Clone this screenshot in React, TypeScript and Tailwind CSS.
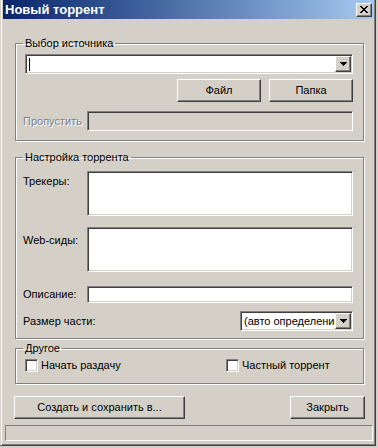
import React from "react";

const sunken =
  "border border-t-[#808080] border-l-[#808080] border-r-white border-b-white shadow-[inset_1px_1px_0_#404040,inset_-1px_-1px_0_#d4d0c8]";
const raised =
  "border border-t-white border-l-white border-r-[#404040] border-b-[#404040] shadow-[inset_-1px_-1px_0_#808080] bg-[#d4d0c8]";
const group =
  "border border-[#808080] shadow-[inset_1px_1px_0_#fff,1px_1px_0_#fff] ml-[12px] mr-[10px] pl-[7px] pr-[10px]";

const DownArrow = () => (
  <svg width="7" height="4" viewBox="0 0 7 4" shapeRendering="crispEdges">
    <path d="M0 0h7v1H0zM1 1h5v1H1zM2 2h3v1H2zM3 3h1v1H3z" fill="#000" />
  </svg>
);

const Combo = ({ className, children }: { className: string; children?: React.ReactNode }) => (
  <div className={`${sunken} bg-white flex items-center p-[1px] ${className}`}>
    <div className="flex-1 min-w-0 overflow-hidden whitespace-nowrap pl-[2px]">{children}</div>
    <div className={`${raised} w-[16px] h-full flex items-center justify-center shrink-0`}>
      <DownArrow />
    </div>
  </div>
);

const Button = ({ className, children }: { className: string; children: React.ReactNode }) => (
  <div className={`${raised} h-[23px] flex items-center justify-center ${className}`}>{children}</div>
);

const Checkbox = ({ label, className }: { label: string; className?: string }) => (
  <div className={`flex items-center gap-[3px] ${className ?? ""}`}>
    <div className={`${sunken} w-[13px] h-[13px] bg-white`} />
    <span>{label}</span>
  </div>
);

export default function App() {
  return (
    <div className="w-[378px] h-[448px] bg-[#d4d0c8] text-[11px] leading-[13px] text-black font-['Tahoma','Liberation_Sans',Arial,sans-serif]">
      <div className="w-[376px] h-[446px] border-l border-r border-b border-l-[#d4d0c8] border-r-[#404040] border-b-[#404040] shadow-[inset_1px_0_0_#fff,inset_-1px_-1px_0_#808080] pl-[2px] pr-[1px] pb-[1px] flex flex-col">
        {/* Title bar */}
        <div className="h-[19px] shrink-0 flex items-center justify-between pl-[2px] pr-[2px] bg-linear-to-r from-[#0a246a] to-[#a6caf0]">
          <span className="text-white font-bold text-[13px] leading-[15px]">Новый торрент</span>
          <div className={`${raised} w-[16px] h-[14px] flex items-center justify-center`}>
            <svg width="8" height="7" viewBox="0 0 8 7" shapeRendering="crispEdges">
              <path
                d="M0 0h2v1H0zM6 0h2v1H6zM1 1h2v1H1zM5 1h2v1H5zM2 2h4v1H2zM3 3h2v1H3zM2 4h4v1H2zM1 5h2v1H1zM5 5h2v1H5zM0 6h2v1H0zM6 6h2v1H6z"
                fill="#000"
              />
            </svg>
          </div>
        </div>

        {/* Source */}
        <fieldset className={`${group} mt-[18px] pt-[4px] pb-[9px]`}>
          <legend className="px-[2px] leading-[13px]">Выбор источника</legend>
          <div className={`${sunken} ml-[2px] h-[20px] bg-white flex items-center p-[1px]`}>
            <div className="flex-1 pl-[2px] flex items-center">
              <div className="w-[1px] h-[13px] bg-black" />
            </div>
            <div className={`${raised} w-[16px] h-full flex items-center justify-center`}>
              <DownArrow />
            </div>
          </div>
          <div className="flex justify-end gap-[8px] mt-[5px]">
            <Button className="w-[84px]">Файл</Button>
            <Button className="w-[84px]">Папка</Button>
          </div>
          <div className="flex items-center mt-[9px]">
            <span className="w-[64px] text-[#808080] [text-shadow:1px_1px_0_#fff]">Пропустить</span>
            <div className={`${sunken} flex-1 h-[20px] bg-[#d4d0c8]`} />
          </div>
        </fieldset>

        {/* Torrent settings */}
        <fieldset className={`${group} mt-[10px] pt-[7px] pb-[7px]`}>
          <legend className="px-[2px] leading-[13px]">Настройка торрента</legend>
          <div className="flex items-start">
            <span className="w-[64px] pt-[4px]">Трекеры:</span>
            <div className={`${sunken} flex-1 h-[45px] bg-white`} />
          </div>
          <div className="flex items-start mt-[11px]">
            <span className="w-[64px] pt-[7px]">Web-сиды:</span>
            <div className={`${sunken} flex-1 h-[45px] bg-white`} />
          </div>
          <div className="flex items-center mt-[14px]">
            <span className="w-[64px]">Описание:</span>
            <div className={`${sunken} flex-1 h-[17px] bg-white`} />
          </div>
          <div className="flex items-center justify-between mt-[8px]">
            <span>Размер части:</span>
            <Combo className="w-[113px] h-[20px]">(авто определение)</Combo>
          </div>
        </fieldset>

        {/* Other */}
        <fieldset className={`${group} mt-[3px] pt-[4px] pb-[11px]`}>
          <legend className="px-[2px] leading-[13px]">Другое</legend>
          <div className="flex h-[13px]">
            <Checkbox label="Начать раздачу" className="ml-[2px] w-[201px]" />
            <Checkbox label="Частный торрент" />
          </div>
        </fieldset>

        {/* Bottom buttons */}
        <div className="flex justify-between mt-[12px] ml-[11px] mr-[9px]">
          <Button className="w-[171px]">Создать и сохранить в...</Button>
          <Button className="w-[75px]">Закрыть</Button>
        </div>

        {/* Status bar */}
        <div className="mt-[6px] ml-[2px] mr-[1px] h-[16px] border border-t-[#808080] border-l-[#808080] border-r-white border-b-white" />
      </div>
    </div>
  );
}
